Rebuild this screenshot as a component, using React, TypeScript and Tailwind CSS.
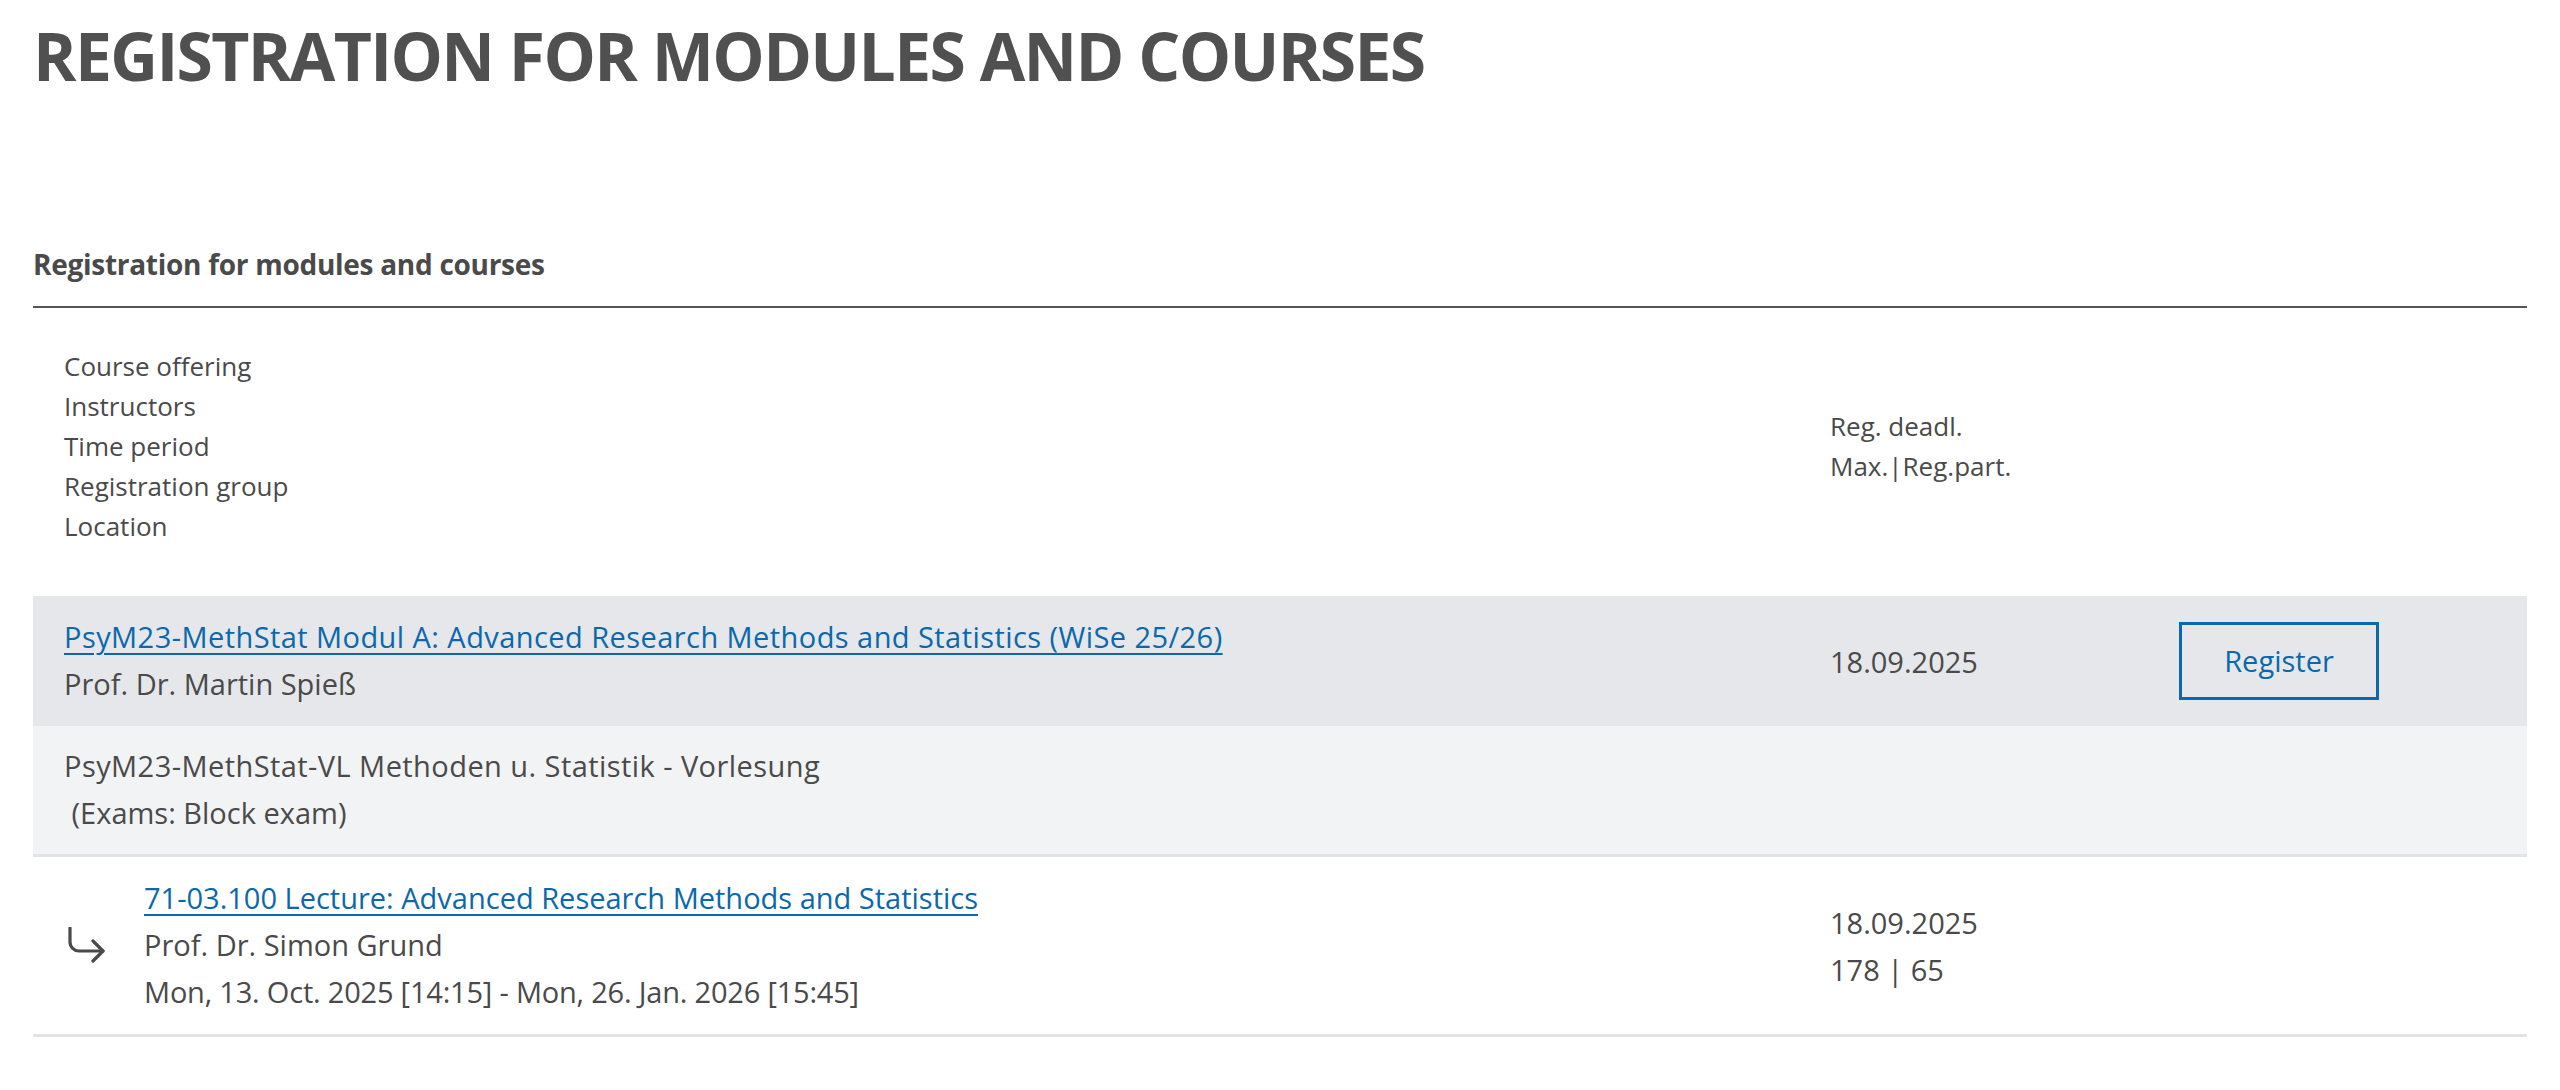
const ArrowIcon = () => (
    <svg width="38" height="36" viewBox="0 0 38 36" fill="none" stroke="#4a4a4a" strokeWidth="3.2" strokeLinecap="round" strokeLinejoin="round">
        <path d="M2 1 V15 a9 9 0 0 0 9 9 H35" />
        <path d="M25 14 L35 24 L25 34" />
    </svg>
);

const App = () => {
    return (
        <div className="min-h-screen bg-white px-[33px] pt-[15px] text-[#4a4a4a] font-['Open_Sans',sans-serif]">
            <h1 className="text-[66px] leading-[80px] font-bold text-[#505050] tracking-[-0.025em]">
                REGISTRATION FOR MODULES AND COURSES
            </h1>

            <h2 className="mt-[149px] pb-[22px] border-b-2 border-[#555555] text-[28px] leading-[40px] font-bold tracking-[-0.01em]">
                Registration for modules and courses
            </h2>

            <div className="grid grid-cols-[1fr_349px_348px] text-[29px]">
                {/* cabecera */}
                <div className="pl-[31px] pt-[38px] pb-[50px] text-[26px] leading-[40px]">
                    <div>Course offering</div>
                    <div>Instructors</div>
                    <div>Time period</div>
                    <div>Registration group</div>
                    <div>Location</div>
                </div>
                <div className="flex flex-col justify-center pt-[38px] pb-[50px] text-[26px] leading-[40px]">
                    <div>Reg. deadl.</div>
                    <div>Max.|Reg.part.</div>
                </div>
                <div />

                {/* modulo */}
                <div className="bg-[#e5e7ea] pl-[31px] pt-[17px] pb-[19px] leading-[47px]">
                    <a href="#" className="text-[#0b68ad] underline decoration-2 underline-offset-[5px] tracking-[0.015em]">
                        PsyM23-MethStat Modul A: Advanced Research Methods and Statistics (WiSe 25/26)
                    </a>
                    <div>Prof. Dr. Martin Spieß</div>
                </div>
                <div className="bg-[#e5e7ea] flex items-center leading-[47px]">18.09.2025</div>
                <div className="bg-[#e5e7ea] flex items-center">
                    <button
                        type="button"
                        className="w-[200px] h-[78px] border-[3px] border-[#0b68ad] text-[#0b68ad] text-[29px] hover:bg-white"
                    >
                        Register
                    </button>
                </div>

                {/* grupo */}
                <div className="bg-[#f2f3f5] border-b-[3px] border-[#e3e4e7] pl-[31px] pt-[16px] pb-[18px] leading-[47px]">
                    <div className="tracking-[0.015em]">PsyM23-MethStat-VL Methoden u. Statistik - Vorlesung</div>
                    <div>&nbsp;(Exams: Block exam)</div>
                </div>
                <div className="bg-[#f2f3f5] border-b-[3px] border-[#e3e4e7]" />
                <div className="bg-[#f2f3f5] border-b-[3px] border-[#e3e4e7]" />

                {/* curso */}
                <div className="border-b-[3px] border-[#e3e4e7] pl-[35px] pt-[17px] pb-[19px] leading-[47px] flex items-center gap-[38px]">
                    <ArrowIcon />
                    <div>
                        <a href="#" className="text-[#0b68ad] underline decoration-2 underline-offset-[5px]">
                            71-03.100 Lecture: Advanced Research Methods and Statistics
                        </a>
                        <div>Prof. Dr. Simon Grund</div>
                        <div className="tracking-[-0.007em]">Mon, 13. Oct. 2025 [14:15] - Mon, 26. Jan. 2026 [15:45]</div>
                    </div>
                </div>
                <div className="border-b-[3px] border-[#e3e4e7] flex flex-col justify-center leading-[47px]">
                    <div>18.09.2025</div>
                    <div>178 | 65</div>
                </div>
                <div className="border-b-[3px] border-[#e3e4e7]" />
            </div>
        </div>
    );
};

export default App;
